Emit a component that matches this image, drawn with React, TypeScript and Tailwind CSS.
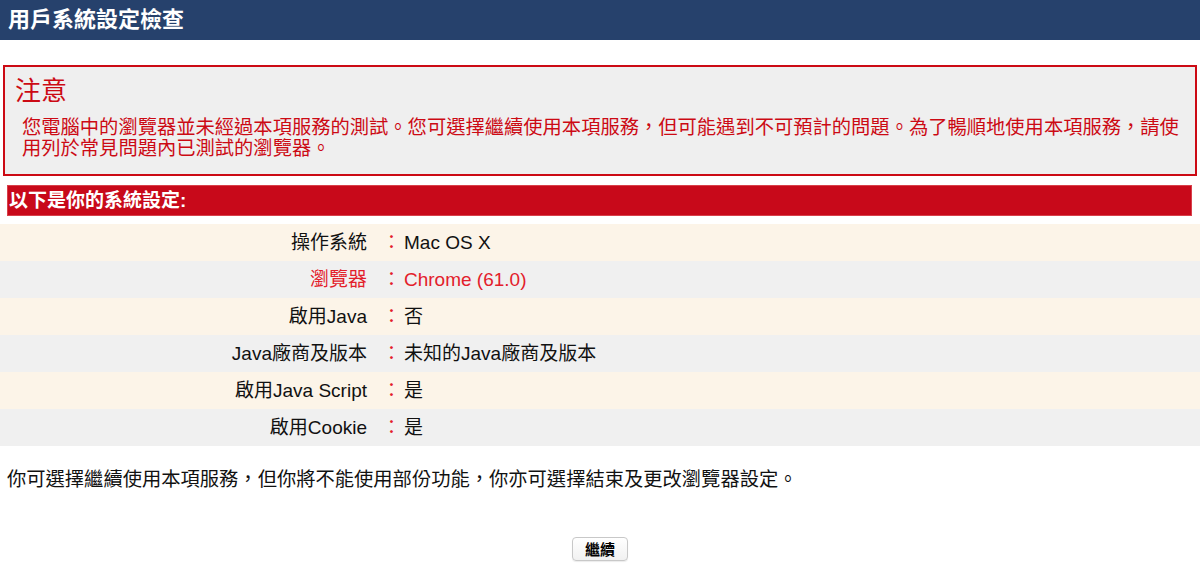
const font = "font-['Liberation_Sans','Noto_Sans_CJK_TC',sans-serif]";

const rows = [
  { label: "操作系統", value: "Mac OS X" },
  { label: "瀏覽器", value: "Chrome (61.0)", warn: true },
  { label: "啟用Java", value: "否" },
  { label: "Java廠商及版本", value: "未知的Java廠商及版本" },
  { label: "啟用Java Script", value: "是" },
  { label: "啟用Cookie", value: "是" },
];

export default function App() {
  return (
    <div className={`${font} min-h-[584px] bg-white text-[#111]`}>
      {/* Title bar */}
      <div className="flex h-[40px] items-center bg-[#26416c] pl-[8px]">
        <h1 className="text-[22px] font-bold leading-none text-white">用戶系統設定檢查</h1>
      </div>

      {/* Warning box */}
      <div className="mx-[3px] mt-[25px] border-2 border-[#cc0a14] bg-[#efefef] px-[10px] pb-[15px] pt-[9px]">
        <div className="text-[26px] leading-[31px] text-[#cc0a14]">注意</div>
        <p className="ml-[7px] mt-[10px] text-[19.3px] leading-[21px] text-[#cc0a14]">
          您電腦中的瀏覽器並未經過本項服務的測試。您可選擇繼續使用本項服務，但可能遇到不可預計的問題。為了暢順地使用本項服務，請使用列於常見問題內已測試的瀏覽器。
        </p>
      </div>

      {/* Settings */}
      <div className="ml-[7px] mr-[8px] mt-[9px] flex h-[31px] items-center border border-[#d8404a] bg-[#c8091a] pl-[1px]">
        <span className="text-[19px] font-bold leading-none text-white">以下是你的系統設定:</span>
      </div>

      <div className="mt-[8px]">
        {rows.map((r, i) => (
          <div
            key={r.label}
            className={`grid h-[37px] grid-cols-[367px_37px_1fr] items-center text-[19px] leading-none ${
              i % 2 === 0 ? "bg-[#fcf4e8]" : "bg-[#f0f0f0]"
            }`}
          >
            <div className={`text-right ${r.warn ? "text-[#e3202b]" : ""}`}>{r.label}</div>
            <div className="pl-[15px] text-[#e3202b]">：</div>
            <div className={r.warn ? "text-[#e3202b]" : ""}>{r.value}</div>
          </div>
        ))}
      </div>

      <p className="ml-[7px] mt-[23px] text-[19.3px] leading-[22px]">
        你可選擇繼續使用本項服務，但你將不能使用部份功能，你亦可選擇結束及更改瀏覽器設定。
      </p>

      <div className="mt-[46px] flex justify-center">
        <button className="h-[24px] w-[56px] rounded-[4px] border border-[#c8c8c8] bg-gradient-to-b from-white to-[#f1f1f1] text-[15px] font-bold leading-none text-black shadow-[0_1px_1px_rgba(0,0,0,0.08)]">
          繼續
        </button>
      </div>
    </div>
  );
}
